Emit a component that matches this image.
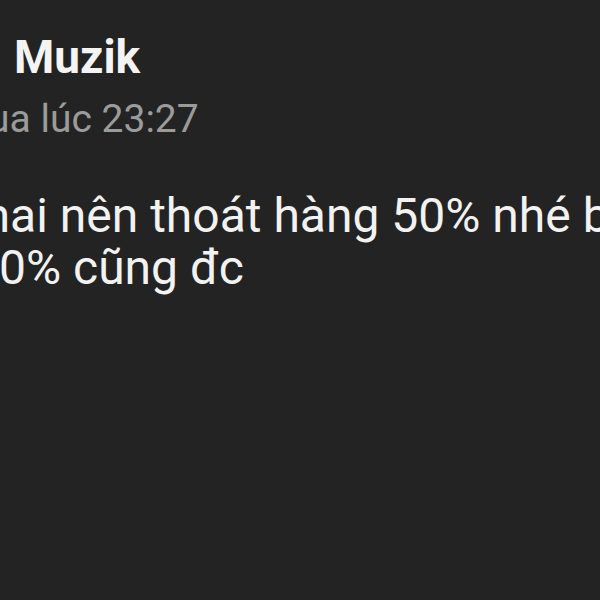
export default function App() {
  return (
    <div className="w-[600px] h-[600px] overflow-hidden bg-[#232323] text-white" style={{ fontFamily: 'Roboto, "Noto Sans", sans-serif' }}>
      <div className="pt-[30px] whitespace-nowrap">
        <div className="ml-[14px] text-[46px] leading-[54px] font-bold text-[#f4f4f4]">Muzik</div>
        <div className="-ml-[128px] mt-[12px] text-[39px] leading-[46px] text-[#9b9b9b]">Hôm qua lúc 23:27</div>
        <div className="mt-[48px] text-[48px] leading-[52px] text-[#f2f2f2]">
          <div className="-ml-[32px]">mai nên thoát hàng 50% nhé bạn</div>
          <div className="-ml-[28px]">30% cũng đc</div>
        </div>
      </div>
    </div>
  );
}
